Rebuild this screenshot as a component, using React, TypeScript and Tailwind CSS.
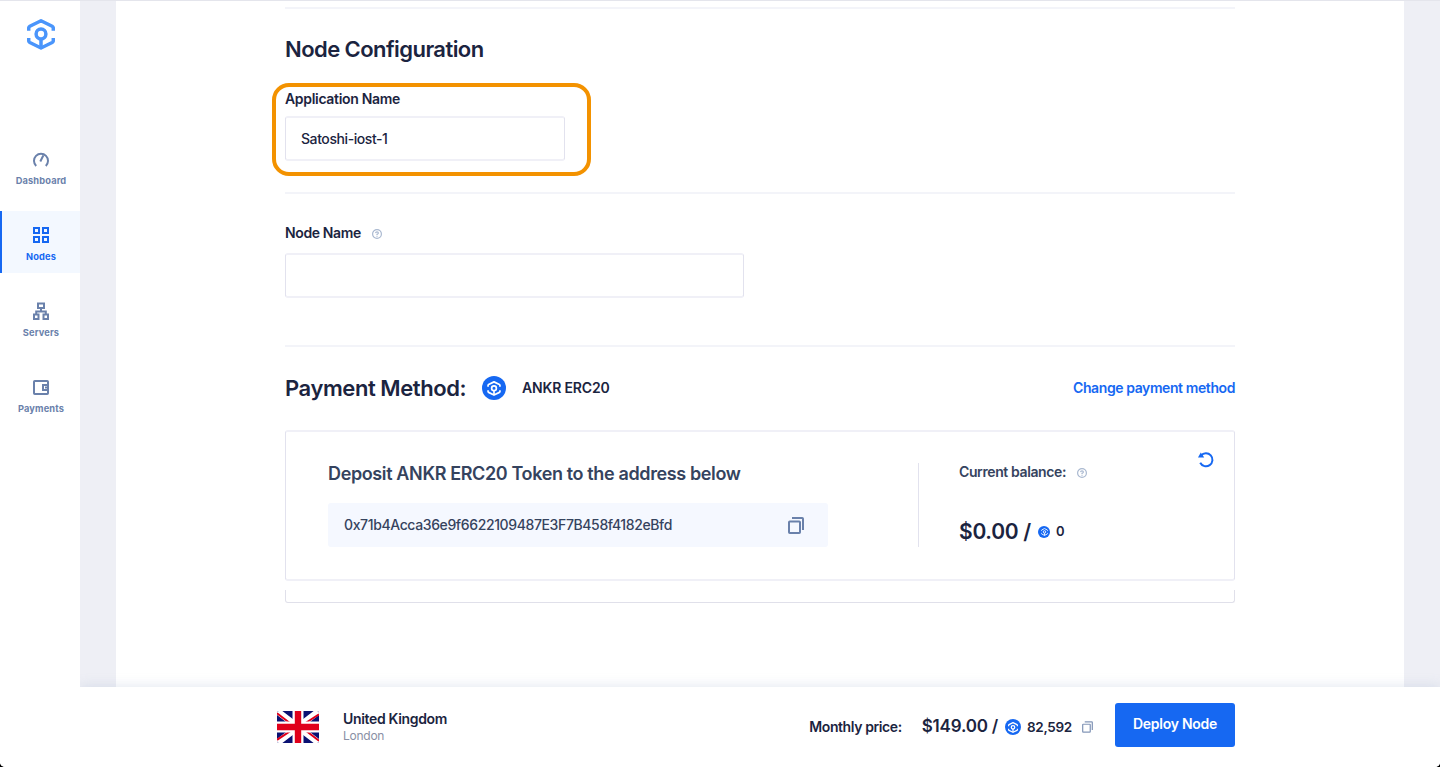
import type { ReactNode } from "react";

function AnkrMark({ className }: { className: string }) {
  return (
    <svg viewBox="0 0 28 31" className={className} fill="none" stroke="currentColor" strokeWidth="3.5" strokeLinejoin="round">
      <path d="M1.7 11.7V9.2Q1.7 7.9 2.8 7.3L14 1.8L25.2 7.3Q26.3 7.9 26.3 9.2V11.7" />
      <path d="M1.7 19V21.6Q1.7 22.9 2.8 23.5L14 29L25.2 23.5Q26.3 22.9 26.3 21.6V19" />
      <circle cx="14" cy="15" r="4.9" />
      <path d="M14 20V29" />
    </svg>
  );
}

function Coin({ className, mark }: { className: string; mark: string }) {
  return (
    <span className={`flex shrink-0 items-center justify-center rounded-full bg-[#1668f2] text-white ${className}`}>
      <AnkrMark className={mark} />
    </span>
  );
}

function Help() {
  return (
    <svg viewBox="0 0 10 10" className="mt-px h-[10px] w-[10px]" fill="none" stroke="#a9b8d0" strokeWidth="1.2">
      <circle cx="5" cy="5" r="4.4" />
      <path d="M3.6 4.1Q3.7 2.8 5 2.8T6.4 4Q6.4 4.8 5 5.4V6M5 6.7V7.7" />
    </svg>
  );
}

function Copy({ className, w }: { className: string; w: number }) {
  return (
    <svg viewBox="0 0 16 17" className={className} fill="none" stroke="currentColor" strokeWidth={w} strokeLinejoin="round">
      <rect x="1" y="4.5" width="11" height="11.5" rx="0.8" />
      <path d="M4 1H14.2Q15 1 15 1.8V13" />
    </svg>
  );
}

function NavItem({ label, active, children }: { label: string; active?: boolean; children: ReactNode }) {
  return (
    <a
      className={`flex h-[62px] flex-col items-center border-l-2 pt-[15px] ${
        active ? "border-[#1668f2] bg-[#f3f8ff] text-[#1668f2]" : "border-transparent text-[#6a81ab]"
      }`}
    >
      <svg viewBox="0 0 16 18" className="h-[18px] w-4" fill="none" stroke="currentColor" strokeWidth="2">
        {children}
      </svg>
      <span className="mt-[6px] text-[9.25px] leading-[14px] font-bold tracking-[0.15px]">{label}</span>
    </a>
  );
}

function Flag() {
  return (
    <svg viewBox="0 0 42 32" className="h-8 w-[42px] rounded-[2px]">
      <path fill="#0a1172" d="M0 0H42V32H0Z" />
      <path stroke="#fff" strokeWidth="6.5" d="M0 0L42 32M42 0L0 32" />
      <path stroke="#e0001b" strokeWidth="2" d="M0 2.2L16 14.5M26 17.5L42 29.8M42 3.4L27 13M15 19L0 28.8" />
      <path stroke="#fff" strokeWidth="11" d="M21 0V32M0 16H42" />
      <path stroke="#e0001b" strokeWidth="6.4" d="M21 0V32M0 16H42" />
    </svg>
  );
}

export default function App() {
  return (
    <div className="h-[782px] w-[1440px] overflow-hidden bg-white font-['Inter',sans-serif] text-[#1b2440]">
      <div className="h-[767px] bg-black">
        <div className="flex h-full overflow-hidden rounded-b-[5px] border-t border-[#e4e5ec] bg-white">
          <aside className="relative z-10 w-20 shrink-0 bg-white">
            <div className="flex h-[134px] justify-center pt-[18px] text-[#4a95fb]">
              <AnkrMark className="ml-px h-[31px] w-7" />
            </div>
            <nav className="flex flex-col gap-[14px]">
              <NavItem label="Dashboard">
                <path d="M3.2 15.9A7 7 0 1 1 12.8 15.9M7.3 11.5L10.3 5.5" />
              </NavItem>
              <NavItem label="Nodes" active>
                <path d="M1 2H6V7H1ZM10 2H15V7H10ZM1 11H6V16H1ZM10 11H15V16H10Z" />
              </NavItem>
              <NavItem label="Servers">
                <path d="M5 1.5H11V6H5ZM1 12.5H5.5V17H1ZM10.5 12.5H15V17H10.5ZM8 6V9.5M3.2 12.5V9.5H12.8V12.5" />
              </NavItem>
              <NavItem label="Payments">
                <rect x="1" y="3" width="14" height="13" rx="0.8" />
                <path d="M15 7H10V12H15M12 9.5H14" />
              </NavItem>
            </nav>
          </aside>

          <div className="flex flex-1 flex-col bg-[#eeeff5]">
            <main className="mx-9 h-[686px] bg-white px-[169px] pt-[6px]">
              <div className="h-[2px] bg-[#f3f4f9]" />
              <h2 className="mt-[26px] h-7 text-[22px] leading-7 font-semibold tracking-[-0.56px]">Node Configuration</h2>

              <section className="relative mt-[26px]">
                <div className="absolute -top-[6px] -left-[13px] h-[93px] w-[319px] rounded-[17px] border-[4.5px] border-[#f39200]" />
                <p className="h-5 text-sm leading-5 font-semibold tracking-[-0.32px]">Application Name</p>
                <div className="mt-[7px] flex h-[45px] w-[280px] items-center rounded-[3px] border border-x-[#e2e2ee] border-y-2 border-y-[#f0f0f7] px-[15px] text-sm font-medium tracking-[-0.42px]">
                  Satoshi-iost-1
                </div>
              </section>

              <div className="mt-[31px] h-[2px] bg-[#f3f4f9]" />
              <section className="mt-[29px]">
                <p className="flex h-5 items-center text-sm font-semibold tracking-[-0.37px]">
                  Node Name
                  <span className="ml-[11px]"><Help /></span>
                </p>
                <div className="mt-[10px] h-[45px] w-[459px] rounded-[3px] border border-x-[#e2e2ee] border-y-2 border-y-[#f0f0f7]" />
              </section>

              <div className="mt-[47px] h-[2px] bg-[#f3f4f9]" />
              <div className="mt-[26px] flex h-[30px] items-center">
                <h2 className="text-[22px] font-semibold tracking-[-0.43px]">Payment Method:</h2>
                <Coin className="ml-4 h-6 w-6" mark="h-[15px] w-[14px]" />
                <span className="ml-4 text-sm font-semibold tracking-[-0.17px]">ANKR ERC20</span>
                <a className="ml-auto text-sm font-semibold tracking-[-0.41px] text-[#1668f2]">Change payment method</a>
              </div>

              <div className="mt-[27px] flex h-[151px] rounded-[3px] border border-x-[#e2e2ee] border-y-2 border-y-[#f0f0f7] pl-[42px] text-[#35435e]">
                <div className="w-[590px] pt-[30px]">
                  <h3 className="h-6 text-lg leading-6 font-semibold tracking-[-0.37px]">Deposit ANKR ERC20 Token to the address below</h3>
                  <div className="mt-[17px] flex h-11 w-[500px] items-center justify-between rounded-[3px] bg-[#f5f8ff] pr-6 pl-4 text-sm font-medium tracking-[-0.38px]">
                    0x71b4Acca36e9f6622109487E3F7B458f4182eBfd
                    <span className="text-[#6a81ab]"><Copy className="h-[17px] w-4" w={2} /></span>
                  </div>
                </div>
                <div className="mt-[31px] h-[84px] w-px bg-[#e2e2ee]" />
                <div className="ml-10 flex-1 pt-[30px]">
                  <p className="flex h-5 items-center text-sm font-semibold tracking-[-0.39px]">
                    Current balance:
                    <span className="ml-[11px]"><Help /></span>
                  </p>
                  <p className="mt-[35px] flex h-[30px] items-center font-semibold text-[#1b2440]">
                    <span className="text-[21px] tracking-[-0.28px]">$0.00 /</span>
                    <Coin className="ml-[7px] h-3 w-3" mark="h-2 w-[7px]" />
                    <span className="ml-[6px] text-[13px]">0</span>
                  </p>
                </div>
                <svg viewBox="0 0 16 16" className="mt-5 mr-5 h-4 w-4" fill="none" stroke="#1668f2" strokeWidth="2">
                  <path d="M3 3.6A6.5 6.5 0 1 1 2.2 10.8" />
                  <path d="M2.8 .6L0 5.6H6.2Z" fill="#1668f2" stroke="none" />
                </svg>
              </div>
              <div className="mt-[9px] h-[13px] rounded-b-[3px] border-x border-b border-[#e0e0ea]" />
            </main>

            <footer className="relative flex h-20 bg-white pt-4 pr-[205px] pl-[197px] shadow-[0_0_12px_rgba(150,170,200,0.3)]">
              <div className="pt-2"><Flag /></div>
              <div className="ml-6 pt-[7px]">
                <p className="h-[18px] text-sm leading-[18px] font-semibold tracking-[-0.33px]">United Kingdom</p>
                <p className="h-4 text-xs leading-4 tracking-[-0.25px] text-[#8a90a5]">London</p>
              </div>
              <div className="ml-auto flex h-12 items-center font-semibold">
                <span className="text-sm tracking-[-0.4px]">Monthly price:</span>
                <span className="ml-5 text-[17px] tracking-[-0.2px]">$149.00 /</span>
                <Coin className="ml-[7px] h-4 w-4" mark="h-[11px] w-[10px]" />
                <span className="ml-[6px] text-[13.5px] tracking-[-0.3px]">82,592</span>
                <span className="ml-[10px] text-[#8497b8]"><Copy className="h-3 w-[11px]" w={1.8} /></span>
              </div>
              <button className="ml-[22px] flex h-11 w-[120px] justify-center rounded-[3px] bg-[#1668f2] pt-[11px] text-sm leading-5 font-semibold tracking-[-0.27px] text-white">
                Deploy Node
              </button>
            </footer>
          </div>
        </div>
      </div>
    </div>
  );
}
